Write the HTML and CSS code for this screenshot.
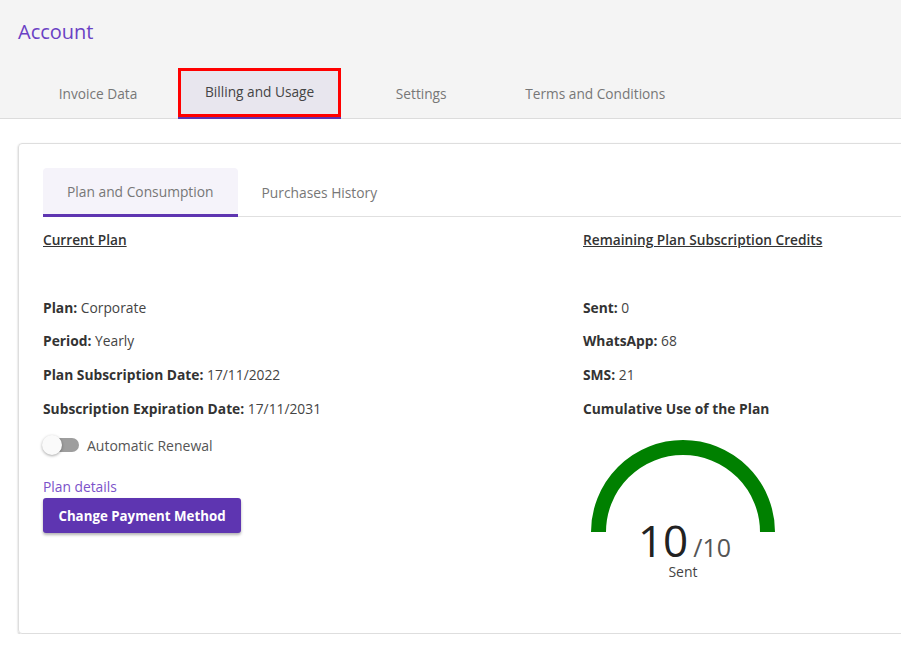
FILE: index.html
```html
<!DOCTYPE html>
<html>
<head>
<meta charset="utf-8">
<link rel="stylesheet" href="styles.css">
</head>
<body>
<div class="page">
  <header class="top">
    <h1 class="title">Account</h1>
    <nav class="tabs">
      <div class="tab">Invoice Data</div>
      <div class="tab active">Billing and Usage</div>
      <div class="tab">Settings</div>
      <div class="tab">Terms and Conditions</div>
    </nav>
  </header>
  <main class="content">
    <section class="card">
      <div class="subtabs">
        <div class="subtab active">Plan and Consumption</div>
        <div class="subtab">Purchases History</div>
      </div>
      <div class="cols">
        <div class="col">
          <h2 class="heading">Current Plan</h2>
          <div class="rows">
            <p class="row"><b>Plan:</b> Corporate</p>
            <p class="row"><b>Period:</b> Yearly</p>
            <p class="row"><b>Plan Subscription Date:</b> 17/11/2022</p>
            <p class="row"><b>Subscription Expiration Date:</b> 17/11/2031</p>
          </div>
          <label class="toggle-row">
            <span class="switch"><span class="thumb"></span></span>
            <span class="toggle-label">Automatic Renewal</span>
          </label>
          <a class="link">Plan details</a>
          <button class="btn">Change Payment Method</button>
        </div>
        <div class="col">
          <h2 class="heading">Remaining Plan Subscription Credits</h2>
          <div class="rows">
            <p class="row"><b>Sent:</b> 0</p>
            <p class="row"><b>WhatsApp:</b> 68</p>
            <p class="row"><b>SMS:</b> 21</p>
            <p class="row"><b>Cumulative Use of the Plan</b></p>
          </div>
          <div class="gauge">
            <svg class="arc" width="186" height="95" viewBox="0 0 186 95">
              <path d="M 8.5 94 A 84.5 84.5 0 0 1 177.5 94" fill="none" stroke="#008000" stroke-width="15"/>
            </svg>
            <div class="gauge-text">
              <div class="nums"><span class="big">10</span><span class="small">/10</span></div>
              <div class="unit">Sent</div>
            </div>
          </div>
        </div>
      </div>
    </section>
  </main>
</div>
</body>
</html>
```
FILE: styles.css
```css
* { box-sizing: border-box; }
html, body { margin: 0; padding: 0; }
body {
  font-family: "Open Sans", "Lato", sans-serif;
  color: #333;
  background: #fff;
  width: 901px;
  overflow: hidden;
}
.page { width: 901px; overflow: hidden; }
.top {
  background: #f4f4f4;
  border-bottom: 1px solid #dcdcdc;
  padding: 0 0 0 18px;
  height: 119px;
}
.title {
  margin: 0;
  padding-top: 19px;
  height: 68px;
  font-size: 20px;
  font-weight: 400;
  color: #6a41c4;
  line-height: 26px;
}
.tabs { display: flex; height: 50px; }
.tab {
  min-width: 160px;
  padding: 0 24px;
  display: flex;
  align-items: center;
  justify-content: center;
  font-size: 13.7px;
  color: #777;
  height: 50px;
}
.tab.active {
  background: #e8e6ee;
  color: #444;
  border: 3px solid #ff0000;
  box-shadow: 0 2px 0 #5e35b1;
  height: 49px;
  padding-bottom: 2px;
}
.content { padding: 24px 0 0 18px; }
.card {
  width: 1100px;
  height: 491px;
  border: 1px solid #dedede;
  border-radius: 4px;
  box-shadow: 0 1px 2px rgba(0,0,0,0.25);
  padding: 24px 24px;
}
.subtabs {
  display: flex;
  border-bottom: 1px solid #e0e0e0;
  height: 49px;
}
.subtab {
  padding: 0 24px;
  display: flex;
  align-items: center;
  font-size: 13.8px;
  color: #777;
  height: 48px;
}
.subtab.active {
  background: #f5f3fa;
  border-radius: 4px 4px 0 0;
  border-bottom: 3px solid #5e35b1;
  padding-top: 1px;
  height: 49px;
}
.cols { display: grid; grid-template-columns: 540px 1fr; }
.col { display: flex; flex-direction: column; align-items: flex-start; }
.heading {
  margin: 15px 0 0;
  font-size: 13.7px;
  font-weight: 600;
  text-decoration: underline;
  color: #333;
  line-height: 16px;
}
.rows { margin-top: 50.5px; display: flex; flex-direction: column; gap: 16.7px; }
.row { margin: 0; font-size: 13.8px; line-height: 17px; color: #444; }
.row b { color: #333; font-weight: 700; }
.toggle-row { display: flex; align-items: center; margin-top: 18.5px; height: 20px; }
.switch {
  position: relative;
  width: 36px;
  height: 14px;
  border-radius: 7px;
  background: #9e9e9e;
  display: block;
}
.thumb {
  position: absolute;
  left: -1px;
  top: -3px;
  width: 20px;
  height: 20px;
  border-radius: 50%;
  background: #fafafa;
  box-shadow: 0 1px 3px rgba(0,0,0,0.35);
}
.toggle-label { margin-left: 8px; font-size: 14px; color: #555; }
.link { margin-top: 24px; font-size: 13.8px; color: #7b52c9; line-height: 16px; }
.btn {
  margin-top: 3px;
  width: 198px;
  height: 35px;
  background: #5e35b1;
  color: #fff;
  border: none;
  border-radius: 3px;
  font-family: inherit;
  font-size: 13.3px;
  font-weight: 700;
  box-shadow: 0 2px 3px rgba(0,0,0,0.3);
}
.gauge { position: relative; width: 186px; margin: 21.5px 0 0 7px; height: 150px; }
.arc { display: block; }
.gauge-text {
  position: absolute;
  left: 0; right: 0;
  top: 80px;
  text-align: center;
}
.nums { display: flex; justify-content: center; align-items: baseline; line-height: 44px; height: 44px; padding-left: 3px; }
.big { font-size: 44px; color: #222; font-weight: 400; }
.small { font-size: 25px; color: #555; margin-left: 5px; }
.unit { font-size: 14px; color: #444; margin-top: 1px; line-height: 17px; }
```
